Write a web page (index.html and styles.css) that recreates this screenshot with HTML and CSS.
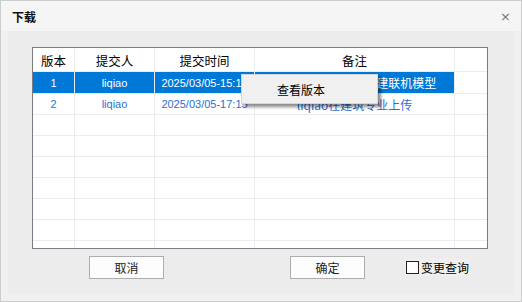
FILE: index.html
```html
<!DOCTYPE html>
<html lang="zh">
<head>
<meta charset="utf-8">
<link rel="stylesheet" href="styles.css">
</head>
<body>
<div class="window">
  <div class="titlebar">
    <span class="title">下载</span>
    <span class="close">×</span>
  </div>
  <div class="panel">
    <div class="table">
      <div class="row head">
        <div class="cell">版本</div>
        <div class="cell">提交人</div>
        <div class="cell">提交时间</div>
        <div class="cell">备注</div>
        <div class="cell"></div>
      </div>
      <div class="row sel">
        <div class="cell">1</div>
        <div class="cell">liqiao</div>
        <div class="cell">2025/03/05-15:18</div>
        <div class="cell">liqiao在建筑专业创建联机模型</div>
        <div class="cell"></div>
      </div>
      <div class="row data">
        <div class="cell">2</div>
        <div class="cell">liqiao</div>
        <div class="cell">2025/03/05-17:15</div>
        <div class="cell">liqiao在建筑专业上传</div>
        <div class="cell"></div>
      </div>
      <div class="row"><div class="cell"></div><div class="cell"></div><div class="cell"></div><div class="cell"></div><div class="cell"></div></div>
      <div class="row"><div class="cell"></div><div class="cell"></div><div class="cell"></div><div class="cell"></div><div class="cell"></div></div>
      <div class="row"><div class="cell"></div><div class="cell"></div><div class="cell"></div><div class="cell"></div><div class="cell"></div></div>
      <div class="row"><div class="cell"></div><div class="cell"></div><div class="cell"></div><div class="cell"></div><div class="cell"></div></div>
      <div class="row"><div class="cell"></div><div class="cell"></div><div class="cell"></div><div class="cell"></div><div class="cell"></div></div>
      <div class="row"><div class="cell"></div><div class="cell"></div><div class="cell"></div><div class="cell"></div><div class="cell"></div></div>
      <div class="row"><div class="cell"></div><div class="cell"></div><div class="cell"></div><div class="cell"></div><div class="cell"></div></div>
      <div class="menu"><div class="menu-item">查看版本</div></div>
    </div>
    <div class="actions">
      <button class="btn btn-cancel">取消</button>
      <button class="btn btn-ok">确定</button>
      <label class="check"><span class="box"></span><span class="check-label">变更查询</span></label>
    </div>
  </div>
</div>
</body>
</html>
```

FILE: styles.css
```css
* { box-sizing: border-box; }
html, body { margin: 0; padding: 0; }
body {
  width: 522px;
  height: 302px;
  overflow: hidden;
  font-family: "Noto Sans CJK SC", "Liberation Sans", sans-serif;
  font-size: 12px;
  color: #000;
}
.window {
  width: 522px;
  height: 302px;
  border: 1px solid #cdcdcd;
  background: #f0f0f0;
  display: flex;
  flex-direction: column;
}
.titlebar {
  height: 30px;
  background: #f5f5f5;
  display: flex;
  align-items: center;
  justify-content: space-between;
  padding: 0 10px 0 11px;
  flex-shrink: 0;
}
.title {
  font-size: 12px;
  font-weight: bold;
  color: #111;
}
.close {
  font-family: "DejaVu Sans", sans-serif;
  font-size: 13px;
  color: #777;
}
.panel {
  margin: 0 7px 0 7px;
  height: 263px;
  background: #ececec;
  padding: 16px 0 0 24px;
  flex-shrink: 0;
}
.table {
  position: relative;
  width: 456px;
  height: 202px;
  border: 1px solid #7b7b85;
  background: #fff;
  overflow: hidden;
}
.row {
  display: grid;
  grid-template-columns: 42px 80px 100px 200px 32px;
  height: 21px;
}
.row.head { height: 24px; }
.row.sel { height: 22px; }
.cell {
  border-right: 1px solid #ececec;
  border-bottom: 1px solid #ececec;
  display: flex;
  align-items: center;
  justify-content: center;
  white-space: nowrap;
  overflow: hidden;
  font-size: 12px;
}
.cell:last-child { border-right: none; }
.head .cell { font-size: 12.5px; padding-top: 1px; }
.sel .cell {
  background: #0078d7;
  color: #fff;
  border-right-color: #e8eef5;
}
.sel .cell:last-child { background: #fff; }
.sel .cell, .data .cell { font-family: "Liberation Sans", "Noto Sans CJK SC", sans-serif; font-size: 11px; }
.sel .cell:nth-child(4), .data .cell:nth-child(4) { font-family: "Noto Sans CJK SC", sans-serif; font-size: 12px; }
.data .cell { color: #2a6fd8; }
.menu {
  position: absolute;
  left: 208px;
  top: 26px;
  width: 137px;
  height: 30px;
  background: #f0f0f0;
  border: 1px solid #d6d6d6;
  box-shadow: 3px 3px 3px rgba(0, 0, 0, 0.45);
  display: flex;
  align-items: center;
}
.menu-item {
  padding-left: 35px;
  padding-top: 1px;
  font-size: 12px;
  color: #000;
}
.actions {
  position: relative;
  height: 24px;
  margin-top: 6px;
  display: flex;
  align-items: center;
}
.btn {
  width: 75px;
  height: 23px;
  border: 1px solid #adadad;
  background: #fdfdfd;
  font-family: "Noto Sans CJK SC", sans-serif;
  font-size: 12px;
  color: #222;
  padding: 0;
  margin: 0;
}
.btn-cancel { margin-left: 57px; }
.btn-ok { margin-left: 126px; }
.check {
  margin-left: 40px;
  display: flex;
  align-items: center;
  gap: 2px;
  background: #efefef;
  height: 18px;
  padding: 0 1px;
}
.box {
  width: 13px;
  height: 13px;
  border: 1px solid #222;
  background: #fff;
}
.check-label { font-size: 12px; color: #000; }
```
